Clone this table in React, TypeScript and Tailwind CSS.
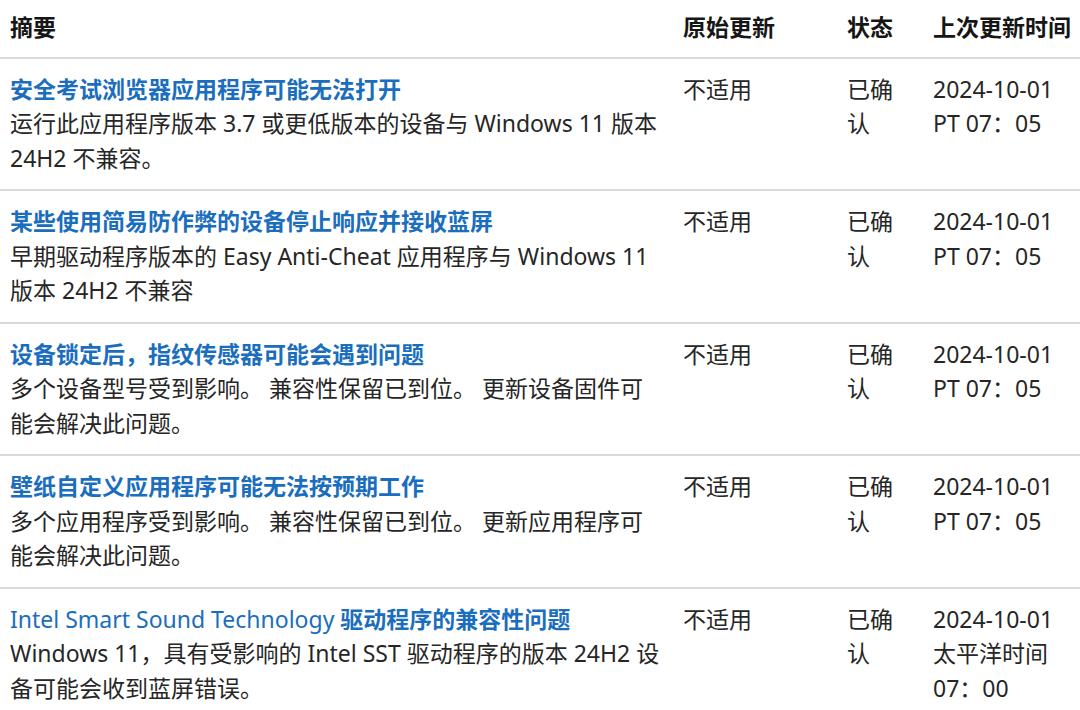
const rows = [
  {
    title: [["", "安全考试浏览器应用程序可能无法打开"]],
    desc: "运行此应用程序版本 3.7 或更低版本的设备与 Windows 11 版本 24H2 不兼容。",
    time: ["2024-10-01", "PT 07：05"],
  },
  {
    title: [["", "某些使用简易防作弊的设备停止响应并接收蓝屏"]],
    desc: "早期驱动程序版本的 Easy Anti-Cheat 应用程序与 Windows 11 版本 24H2 不兼容",
    time: ["2024-10-01", "PT 07：05"],
  },
  {
    title: [["", "设备锁定后，指纹传感器可能会遇到问题"]],
    desc: "多个设备型号受到影响。 兼容性保留已到位。 更新设备固件可能会解决此问题。",
    time: ["2024-10-01", "PT 07：05"],
  },
  {
    title: [["", "壁纸自定义应用程序可能无法按预期工作"]],
    desc: "多个应用程序受到影响。 兼容性保留已到位。 更新应用程序可能会解决此问题。",
    time: ["2024-10-01", "PT 07：05"],
  },
  {
    title: [
      ["Intel Smart Sound Technology ", ""],
      ["", "驱动程序的兼容性问题"],
    ],
    desc: "Windows 11，具有受影响的 Intel SST 驱动程序的版本 24H2 设备可能会收到蓝屏错误。",
    time: ["2024-10-01", "太平洋时间", "07：00"],
  },
];

const grid = "grid grid-cols-[673px_164px_86px_1fr]";

export default function App() {
  return (
    <div
      className="w-[1080px] h-[710px] overflow-hidden bg-white text-[23px] leading-[34.5px] text-[#262626]"
      style={{ fontFamily: '"Noto Sans", "Noto Sans CJK SC", sans-serif' }}
    >
      <div className={`${grid} border-b-2 border-[#d9d9d9] pt-[10px] pb-[12px] font-bold text-[#161616]`}>
        <div className="pl-[10px]">摘要</div>
        <div className="pl-[10px]">原始更新</div>
        <div className="pl-[10px]">状态</div>
        <div className="pl-[10px] whitespace-nowrap">上次更新时间</div>
      </div>
      {rows.map((r, i) => (
        <div key={i} className={`${grid} border-b-2 border-[#d9d9d9] pt-[13px] pb-[14px]`}>
          <div className="pl-[10px] pr-[11px]">
            <div className="font-bold text-[#1a6ebd]">
              {r.title.map(([latin, cjk], j) =>
                latin ? (
                  <span key={j} className="font-normal">
                    {latin}
                  </span>
                ) : (
                  <span key={j}>{cjk}</span>
                )
              )}
            </div>
            <div>{r.desc}</div>
          </div>
          <div className="pl-[10px]">不适用</div>
          <div className="pl-[10px] w-[66px]">已确认</div>
          <div className="pl-[10px] w-[150px]">
            {r.time.map((t) => (
              <div key={t}>{t}</div>
            ))}
          </div>
        </div>
      ))}
    </div>
  );
}
